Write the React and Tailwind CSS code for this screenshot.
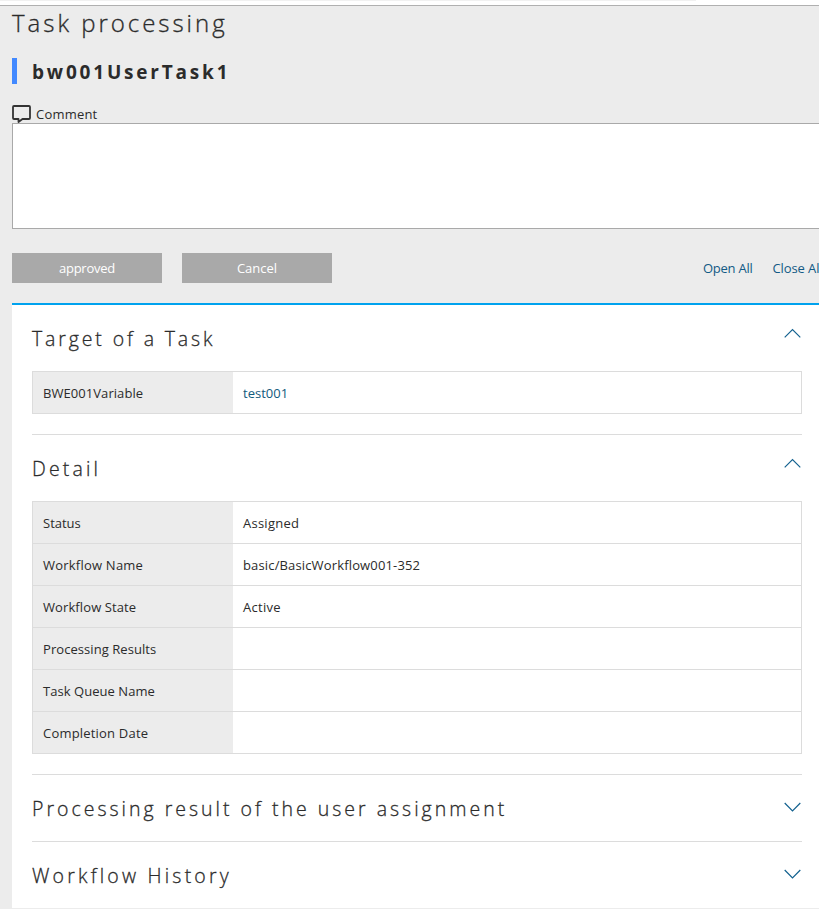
function Chevron({ up }) {
  return (
    <svg width="18" height="11" viewBox="0 0 18 11" fill="none" stroke="#12618f" strokeWidth="1.2" className="block">
      <path d={up ? "M0.7 9.3 L8.5 1.5 L16.3 9.3" : "M0.7 1 L8.5 8.8 L16.3 1"} />
    </svg>
  );
}

function SectionHeader({ title, up, tracking }) {
  return (
    <div className="flex h-[66px] items-start justify-between pt-[22px]">
      <h3 className={`text-[19.5px] leading-[24px] font-light text-[#2b2b2b] whitespace-nowrap [-webkit-text-stroke:0.3px_#2b2b2b] ${tracking}`}>{title}</h3>
      <div className={up ? "mt-[1px]" : "mt-[5px]"}>
        <Chevron up={up} />
      </div>
    </div>
  );
}

function Table({ rows }) {
  return (
    <div className="border border-[#dcdcdc] divide-y divide-[#dcdcdc]">
      {rows.map(([label, value, labelStyle, valueStyle]) => (
        <div key={label} className="flex h-[42px] last:h-[41px] leading-[20px] whitespace-nowrap">
          <div className={`w-[200px] bg-[#ececec] pl-[10px] pt-[11px] ${labelStyle}`}>{label}</div>
          <div className={`flex-1 pl-[10px] pt-[11px] ${valueStyle}`}>{value}</div>
        </div>
      ))}
    </div>
  );
}

const target = [["BWE001Variable", "test001", "tracking-[0.06px]", "text-[#125a7d]"]];

const detail = [
  ["Status", "Assigned", "", "tracking-[0.25px]"],
  ["Workflow Name", "basic/BasicWorkflow001-352", "tracking-[0.22px]", "tracking-[0.15px]"],
  ["Workflow State", "Active", "tracking-[0.1px]", "tracking-[0.3px]"],
  ["Processing Results", "", "tracking-[0.06px]", ""],
  ["Task Queue Name", "", "tracking-[0.05px]", ""],
  ["Completion Date", "", "tracking-[0.2px]", ""],
];

export default function App() {
  return (
    <div className="h-[909px] w-[819px] overflow-hidden bg-[#ececec] font-['Open_Sans','Noto_Sans',sans-serif] text-[13px] text-[#2b2b2b]">
      <div className="h-[6px] border-b border-[#b0b0b0] bg-white">
        <div className="h-px w-[696px] bg-[#f1f1f1]" />
      </div>
      <div className="pl-3">
        <h1 className="h-[52px] text-[24px] leading-[34px] font-light tracking-[2.97px] text-[#2b2b2b] [-webkit-text-stroke:0.3px_#2b2b2b]">Task processing</h1>
        <h2 className="h-[26px] border-l-[5px] border-[#4289ff] pl-[15px] text-[19px] leading-[28px] font-bold tracking-[2.8px]">bw001UserTask1</h2>
        <div className="flex h-[39px] items-end gap-[5px]">
          <svg width="19" height="18" viewBox="0 0 19 18" fill="none" stroke="#333" strokeWidth="1.8" strokeLinejoin="round" className="block">
            <path d="M2 1 H17 Q18 1 18 2 V13 Q18 14 17 14 H10.5 L6.5 17 V14 H2 Q1 14 1 13 V2 Q1 1 2 1 Z" />
          </svg>
          <span className="leading-[18px] tracking-[0.2px]">Comment</span>
        </div>
        <div className="h-[106px] w-[820px] border border-[#a9a9a9] bg-white" />
        <div className="flex h-[74px] items-center gap-5 whitespace-nowrap pt-1 leading-[30px]">
          <button className="h-[30px] w-[150px] shrink-0 bg-[#a9a9a9] text-center tracking-[-0.25px] text-white">approved</button>
          <button className="h-[30px] w-[150px] shrink-0 bg-[#a9a9a9] text-center text-white">Cancel</button>
          <a className="ml-[351px] text-[#125a85] tracking-[-0.25px]">Open All</a>
          <a className="text-[#125a85] tracking-[-0.1px]">Close All</a>
        </div>
        <div className="h-[605px] w-[820px] border-t-2 border-[#00a2ee] bg-white pl-5">
          <div className="w-[770px]">
            <SectionHeader title="Target of a Task" up tracking="tracking-[2.87px]" />
            <Table rows={target} />
            <div className="mt-5 border-t border-[#dcdcdc]">
              <SectionHeader title="Detail" up tracking="tracking-[3.15px]" />
            </div>
            <Table rows={detail} />
            <div className="mt-5 border-t border-[#dcdcdc]">
              <SectionHeader title="Processing result of the user assignment" tracking="tracking-[3px]" />
            </div>
            <div className="border-t border-[#dcdcdc]">
              <SectionHeader title="Workflow History" tracking="tracking-[3.2px]" />
            </div>
          </div>
        </div>
      </div>
    </div>
  );
}
